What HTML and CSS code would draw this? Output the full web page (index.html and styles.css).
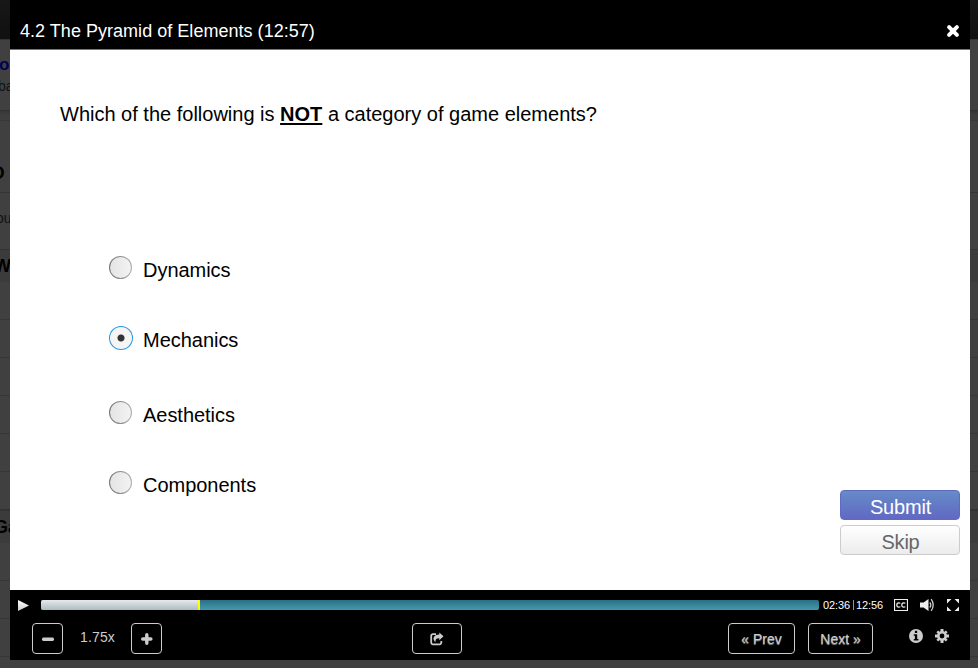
FILE: index.html
```html
<!DOCTYPE html>
<html lang="en">
<head>
<meta charset="utf-8">
<title>4.2 The Pyramid of Elements</title>
<link rel="stylesheet" href="styles.css">
</head>
<body>
<div class="backdrop">
  <div class="bd-top"></div>
  <div class="bd-head"><b class="course">o</b><span class="sub">ba</span></div>
  <div class="bd-gap"></div>
  <div class="bd-title"><b>D</b></div>
  <div class="bd-text"><span>ou</span></div>
  <div class="bd-band first"><b>W</b></div>
  <div class="bd-row"></div><div class="bd-row"></div><div class="bd-row"></div>
  <div class="bd-row"></div><div class="bd-row"></div><div class="bd-row last"></div>
  <div class="bd-band second"><b>Ga</b></div>
  <div class="bd-row"></div><div class="bd-row"></div><div class="bd-row"></div>
  <div class="bd-row"></div>
</div>
<main class="modal">
  <header class="titlebar">
    <h1>4.2 The Pyramid of Elements (12:57)</h1>
    <svg class="close" width="14" height="14" viewBox="0 0 14 14"><path d="M3.1 3.1l7.8 7.8M10.9 3.1l-7.8 7.8" stroke="#fff" stroke-width="4" stroke-linecap="round"/></svg>
  </header>
  <section class="quiz">
    <p class="question">Which of the following is <b>NOT</b> a category of game elements?</p>
    <div class="options">
      <label class="option"><i class="radio"></i><span>Dynamics</span></label>
      <label class="option"><i class="radio selected"></i><span>Mechanics</span></label>
      <label class="option wide"><i class="radio"></i><span>Aesthetics</span></label>
      <label class="option"><i class="radio"></i><span>Components</span></label>
    </div>
    <div class="actions">
      <button class="submit">Submit</button>
      <button class="skip">Skip</button>
    </div>
  </section>
  <footer class="player">
    <div class="timeline">
      <svg class="play" width="12" height="11" viewBox="0 0 12 11"><defs><linearGradient id="p" x2="0" y2="1"><stop stop-color="#fff"/><stop offset="1" stop-color="#ccc"/></linearGradient></defs><path d="M0 0l11 5.5L0 11z" fill="url(#p)"/></svg>
      <div class="track"><div class="played"></div></div>
      <span class="time">02:36</span><i class="sep"></i><span class="time">12:56</span>
      <svg class="cc" width="14" height="12" viewBox="0 0 14 12" fill="none" stroke="#eee"><path d="M.5.5h13v11H.5z" stroke-width="1.2"/><path d="M6.3 4.3Q5.8 3.8 4.7 3.8 2.8 3.8 2.8 6T4.7 8.2Q5.8 8.2 6.3 7.7M11.3 4.3Q10.8 3.8 9.7 3.8 7.8 3.8 7.8 6T9.7 8.2Q10.8 8.2 11.3 7.7" stroke-width="1.2"/></svg>
      <svg class="volume" width="15" height="14" viewBox="0 0 15 14"><path d="M0 4.5h3.6L8.5 1v12L3.6 9.500H0z" fill="#eee"/><path d="M9.800 4.500q2 2.500 0 5M11.200 1.200q4 5.800 0 11.600" fill="none" stroke="#ccc" stroke-width="1.300"/></svg>
      <svg class="full" width="12" height="12" viewBox="0 0 12 12" fill="#eee"><path d="M0 0h4.500L0 4.500zM12 0v4.500L7.500 0zM0 12V7.500L4.500 12zM12 12H7.500L12 7.500z"/></svg>
    </div>
    <div class="controls">
      <button class="ctl square"><svg width="12" height="12" viewBox="0 0 12 12"><path d="M1.700 6.200h8.600" stroke="#ccc" stroke-width="3.500" stroke-linecap="round"/></svg></button>
      <span class="rate">1.75x</span>
      <button class="ctl square"><svg width="12" height="12" viewBox="0 0 12 12"><path d="M1.700 6h8.200M5.800 1.800V10.200" stroke="#ccc" stroke-width="3.400" stroke-linecap="round"/></svg></button>
      <button class="ctl share"><svg width="14" height="14" viewBox="0 0 14 14"><path d="M6 2.200H3A1.800 1.800 0 0 0 1.200 4v6.500A1.800 1.800 0 0 0 3 12.300h6.500a1.800 1.800 0 0 0 1.800-1.800V9" fill="none" stroke="#ccc" stroke-width="1.800"/><path d="M9.300.4l4.200 3.900-4.200 3.900V6.200C6.500 6.100 5.500 7 5.400 9.900 2 7.200 3.200 2.400 9.300 2.400z" fill="#ccc"/></svg></button>
      <button class="ctl prev">« Prev</button>
      <button class="ctl next">Next »</button>
      <svg class="info" width="14" height="14" viewBox="0 0 14 14"><circle cx="7" cy="7" r="7" fill="#ccc"/><path d="M5.900 1.800h2.300v2.100H5.900zM4.800 5.200h3.400v4.700h1.200v1.600H4.800V9.900h1.100V6.800H4.800z" fill="#000"/></svg>
      <svg class="gear" width="14" height="14" viewBox="0 0 14 14"><g stroke="#ccc" stroke-width="3"><path d="M7 0v14M0 7h14"/><path d="M2.300 2.300l9.400 9.400M11.700 2.300l-9.400 9.400" stroke-width="2.600"/></g><circle cx="7" cy="7" r="4.900" fill="#ccc"/><circle cx="7" cy="7" r="2.400" fill="#000"/></svg>
    </div>
  </footer>
</main>
</body>
</html>
```
FILE: styles.css
```css
* { box-sizing: border-box; }
body { margin: 0; width: 978px; height: 668px; overflow: hidden; position: relative; background: #404040; font-family: "Liberation Sans", Arial, sans-serif; }
.backdrop { height: 668px; overflow: hidden; color: #111; }
.backdrop b, .backdrop span { display: block; white-space: nowrap; }
.bd-top { height: 40px; background: linear-gradient(#171717, #101010); border-bottom: 1px solid #333; }
.bd-head { height: 71px; padding-top: 15px; border-bottom: 1px solid #303030; }
.course { color: #000050; font-size: 17px; line-height: 20px; margin-left: -1px; }
.sub { font-size: 14px; line-height: 16px; margin: 3px 0 0 -2px; }
.bd-gap { height: 10px; background: linear-gradient(#373737, #3e3e3e 4px); border-bottom: 1px solid #383838; }
.bd-title { height: 72px; padding-top: 41px; border-bottom: 1px solid #343434; font-size: 19px; line-height: 22px; color: #000; }
.bd-title b { margin-left: -9px; }
.bd-text { height: 56px; padding-top: 16px; font-size: 14px; line-height: 18px; }
.bd-text span { margin-left: -4px; }
.bd-band { height: 33px; background: #3b3b3b; border-top: 1px solid #333; font-size: 18px; line-height: 33px; color: #000; }
.bd-band.first b { margin-left: -6px; }
.bd-band.second { border-top: 2px solid #333; height: 34px; line-height: 32px; }
.bd-band.second b { margin-left: -6px; }
.bd-row { height: 38px; border-bottom: 1px solid #363636; }
.bd-row.last { height: 37px; border: 0; }
.modal { position: absolute; left: 10px; top: 0; width: 960px; height: 660px; background: #fff; display: flex; flex-direction: column; }
.titlebar { height: 50px; background: #000; border-bottom: 1px solid #777; display: flex; align-items: flex-start; justify-content: space-between; padding: 21px 10px 0; color: #fff; }
h1 { font-size: 18px; font-weight: 400; line-height: 21px; margin: 0; letter-spacing: .03px; }
.close { margin-top: 3px; }
.quiz { height: 540px; padding: 53px 10px 0 50px; display: flex; flex-direction: column; }
.question { margin: 0; font-size: 20px; line-height: 23px; white-space: nowrap; color: #000; }
.question b { text-decoration: underline; text-decoration-thickness: 2px; text-underline-offset: 2px; }
.options { margin: 130px 0 0 49px; }
.option { display: flex; height: 24px; margin-bottom: 46px; font-size: 20px; line-height: 28px; letter-spacing: -.03px; }
.option.wide { margin-top: 51px; }
.option span { margin-left: 10px; }
.radio { width: 24px; height: 24px; border-radius: 50%; border: 1.500px solid transparent; background: linear-gradient(90deg, #e4e4e4, #f3f3f3) padding-box, linear-gradient(90deg, #727272, #b0b0b0) border-box; }
.radio:not(.selected) { width: 23px; height: 23px; margin-right: 1px; }
.radio.selected { background: radial-gradient(circle, #333 0 3px, #f5f5f5 4px) padding-box, linear-gradient(#2196d6, #279be4) border-box; }
.actions { align-self: flex-end; margin-top: -51px; display: flex; flex-direction: column; gap: 5px; }
.actions button { width: 120px; height: 30px; padding: 3px 0 0 1px; font: 20px/24px "Liberation Sans", Arial, sans-serif; letter-spacing: -.2px; border-radius: 4px; }
.submit { color: #fff; background: linear-gradient(#658bc8, #6268c4); border: 1px solid #6269c2; }
.skip { color: #666; background: linear-gradient(#fff, #ececec); border: 1px solid #ccc; }
.player { height: 70px; background: #000; color: #ccc; }
.timeline { height: 30px; display: flex; align-items: center; padding-left: 8px; }
.track { width: 778px; height: 10px; margin-left: 11px; border-radius: 2px; overflow: hidden; background: linear-gradient(#2b6f84, #429ab0); }
.played { width: 159px; height: 10px; background: linear-gradient(#e6eaeb, #aabdc1); border-right: 2px solid #ff0; }
.time { width: 29px; margin-left: 4px; color: #fff; font-size: 11px; white-space: nowrap; letter-spacing: -.1px; }
.sep { width: 1px; height: 10px; background: #58a6d8; margin-left: 1px; margin-right: -2px; }
.cc { margin-left: 9px; }
.volume { margin-left: 12px; }
.full { margin-left: 12px; }
.controls { display: flex; padding: 3px 0 0 22px; }
.ctl { height: 31px; padding: 0; background: #000; border: 1px solid #ccc; border-radius: 4px; color: #ccc; font: 14px/29px "Liberation Sans", Arial, sans-serif; display: flex; align-items: center; justify-content: center; text-shadow: 0 1px 1px #999; flex: none; }
.prev, .next { padding-top: 2px; }
.square { width: 31px; }
.rate { width: 68px; font-size: 14px; line-height: 28px; text-align: center; letter-spacing: .15px; padding-left: 1px; }
.share { width: 50px; margin-left: 250px; }
.prev { width: 67px; margin-left: 266px; }
.next { width: 65px; margin-left: 13px; }
.info { margin: 6px 0 0 36px; flex: none; }
.gear { margin: 6px 0 0 12px; flex: none; }
```
